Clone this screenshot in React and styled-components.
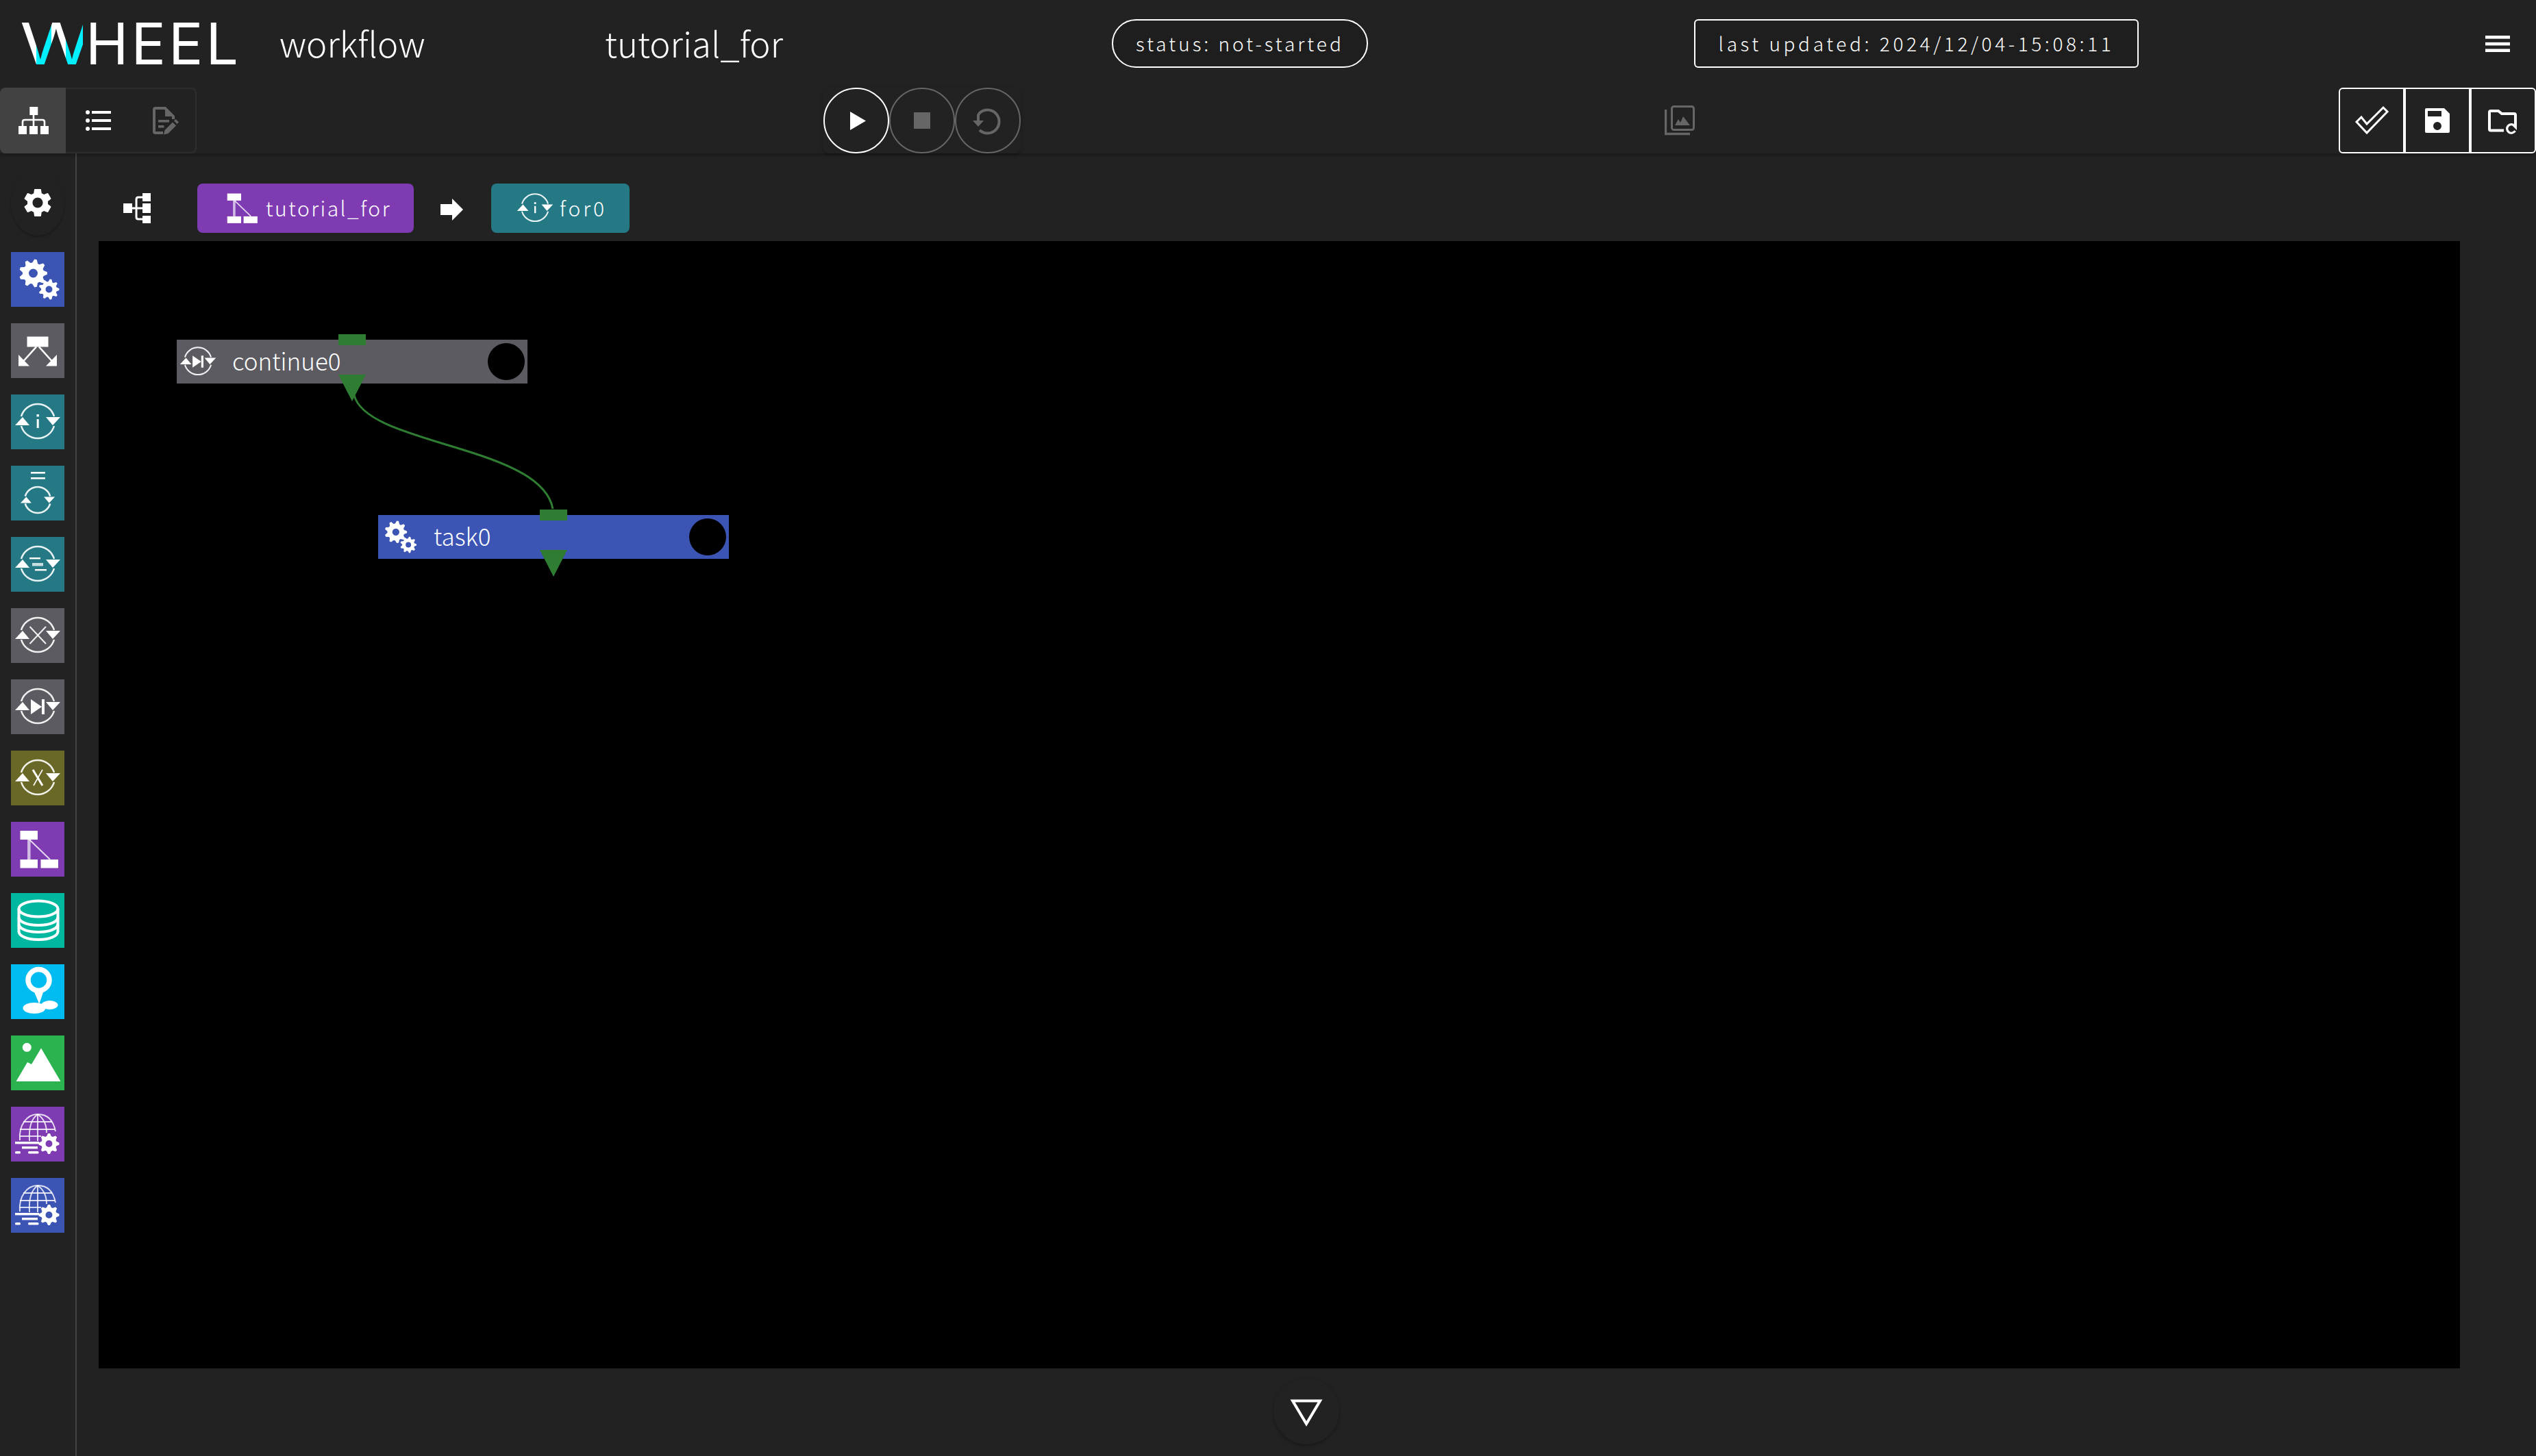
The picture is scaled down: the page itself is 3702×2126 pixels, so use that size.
import React from "react";
import styled, { createGlobalStyle } from "styled-components";
import { MdSettings } from "react-icons/md";

const Global = createGlobalStyle`
  html, body { margin: 0; padding: 0; background: #222222; }
  body { font-family: "Noto Sans CJK JP", "Noto Sans", sans-serif; color: #fff; }
  #root { width: 3702px; height: 2126px; overflow: hidden; }
`;

const Page = styled.div`
  width: 3702px;
  height: 2126px;
  display: flex;
  flex-direction: column;
  background: #222222;
`;

const Header = styled.header`
  height: 128px;
  flex: none;
  display: flex;
  align-items: center;
  position: relative;
`;

const Logo = styled.div`
  margin-left: 29px;
  width: 379px;
  height: 122px;
  display: flex;
  font-family: "Inter", sans-serif;
  font-weight: 400;
  font-size: 84px;
  line-height: 122px;
  letter-spacing: 4px;
  filter: blur(0.6px);
`;

const LogoW = styled.span`
  display: block;
  width: 72px;
  margin-right: 24px;
  letter-spacing: 0;
  transform: scaleX(1.28);
  transform-origin: left center;
  background: linear-gradient(90deg, #fff 0 26.5%, #00f0ff 26.5% 50%, #fff 50% 73%, #00f0ff 73%);
  -webkit-background-clip: text;
  background-clip: text;
  color: transparent;
`;

const HeaderTitle = styled.div`
  font-size: 51px;
  font-weight: 300;
  line-height: 64px;
  width: ${(p) => p.$w}px;
  margin-top: -5px;
`;

const Pill = styled.div`
  box-sizing: border-box;
  height: 71px;
  width: ${(p) => p.$w}px;
  margin-left: ${(p) => p.$ml}px;
  margin-top: -1px;
  padding-bottom: 2px;
  display: flex;
  align-items: center;
  justify-content: center;
  border: 2px solid #fff;
  border-radius: ${(p) => p.$r}px;
  background: #1e1e1e;
  font-size: 28px;
  font-weight: 300;
  letter-spacing: ${(p) => p.$ls}px;
  white-space: nowrap;
`;

const Menu = styled.svg`
  position: absolute;
  left: 3628px;
  top: 52px;
  width: 36px;
  height: 24px;
`;

const Toolbar = styled.div`
  height: 96px;
  flex: none;
  display: flex;
  align-items: flex-start;
  position: relative;
  box-shadow: 0 3px 4px rgba(0, 0, 0, 0.22);
  z-index: 2;
`;

const Toggle = styled.div`
  width: 287px;
  height: 96px;
  display: flex;
  border-radius: 8px;
  box-shadow: inset 0 0 0 2px #2e2e2e;
  overflow: hidden;
`;

const ToggleBtn = styled.div`
  width: 96px;
  height: 96px;
  background: ${(p) => (p.$on ? "#424242" : "transparent")};
  display: flex;
  svg { width: 96px; height: 96px; display: block; }
`;

const Players = styled.div`
  margin-left: 915px;
  display: flex;
  width: 288px;
  border-radius: 8px;
  box-shadow: 0 3px 4px rgba(0, 0, 0, 0.25);
`;

const RoundBtn = styled.div`
  box-sizing: border-box;
  width: 96px;
  height: 96px;
  border-radius: 50%;
  border: 2px solid ${(p) => (p.$on ? "#fff" : "#666")};
  display: flex;
  svg { width: 92px; height: 92px; display: block; }
`;

const GraphIcon = styled.svg`
  margin-left: 940px;
  margin-top: 26px;
  width: 44px;
  height: 44px;
`;

const SaveGroup = styled.div`
  margin-left: auto;
  display: flex;
  width: 288px;
  height: 96px;
`;

const SaveBtn = styled.div`
  box-sizing: border-box;
  width: 96px;
  height: 96px;
  border: 2px solid #fff;
  border-radius: ${(p) => p.$r};
  display: flex;
  svg { width: 92px; height: 92px; display: block; }
`;

const Main = styled.div`
  flex: 1;
  display: flex;
  min-height: 0;
`;

const Sidebar = styled.aside`
  box-sizing: border-box;
  width: 112px;
  flex: none;
  border-right: 2px solid #444;
  padding-left: 16px;
  display: flex;
  flex-direction: column;
`;

const CogButton = styled.div`
  width: 78px;
  height: 96px;
  margin-top: 24px;
  margin-bottom: 24px;
  border-radius: 50%;
  display: flex;
  align-items: center;
  justify-content: center;
  box-shadow: 0 2px 3px rgba(0, 0, 0, 0.25);
`;

const Palette = styled.div`
  display: flex;
  flex-direction: column;
  gap: 24px;
`;

const Card = styled.div`
  width: 78px;
  height: 80px;
  background: ${(p) => p.$bg};
  svg { display: block; width: 78px; height: 80px; filter: blur(0.35px); }
`;

const Content = styled.main`
  flex: 1;
  display: flex;
  flex-direction: column;
  min-width: 0;
`;

const Crumbs = styled.nav`
  box-sizing: border-box;
  height: 128px;
  flex: none;
  display: flex;
  align-items: center;
  padding: 32px 0 0 32px;
`;

const TreeIcon = styled.svg`
  margin-left: 36px;
  margin-right: 68px;
  width: 40px;
  height: 44px;
`;

const Crumb = styled.div`
  height: 72px;
  box-sizing: border-box;
  border-radius: 8px;
  background: ${(p) => p.$bg};
  display: flex;
  align-items: center;
  padding: 0 ${(p) => p.$pr}px 0 33px;
  font-size: 30px;
  font-weight: 300;
  letter-spacing: ${(p) => p.$ls}px;
  svg { flex: none; display: block; width: 62px; height: 64px; margin-right: 5px; filter: blur(0.3px); }
`;

const CrumbLabel = styled.span`
  margin-top: -2px;
`;

const Arrow = styled.svg`
  width: 34px;
  height: 32px;
  margin: 4px 40px 0 39px;
`;

const Canvas = styled.section`
  position: relative;
  height: 1646px;
  flex: none;
  margin: 0 111px 0 32px;
  background: #000;
  overflow: hidden;
`;

const Wire = styled.svg`
  position: absolute;
  left: 0;
  top: 0;
  width: 100%;
  height: 100%;
`;

const Node = styled.div`
  position: absolute;
  left: ${(p) => p.$x}px;
  top: ${(p) => p.$y}px;
  width: 512px;
  height: 64px;
  background: ${(p) => p.$bg};
  display: flex;
  align-items: center;
  font-size: 35px;
  font-weight: 300;
  svg { flex: none; width: 62px; height: 64px; margin: 0 19px 0 0; filter: blur(0.3px); }
`;

const NodeLabel = styled.span`
  margin-top: -5px;
`;

const Dot = styled.div`
  position: absolute;
  right: 4px;
  top: 5px;
  width: 54px;
  height: 54px;
  border-radius: 50%;
  background: #000;
`;

const InPort = styled.div`
  position: absolute;
  left: 236px;
  top: -8px;
  width: 40px;
  height: 16px;
  background: #2e7d32;
`;

const OutPort = styled.div`
  position: absolute;
  left: 236px;
  top: 51px;
  width: 40px;
  height: 39px;
  background: #2e7d32;
  clip-path: polygon(0 0, 100% 0, 50% 100%);
`;

const Footer = styled.div`
  flex: 1;
  display: flex;
  justify-content: center;
  padding-top: 14px;
`;

const DrawerBtn = styled.div`
  width: 96px;
  height: 97px;
  border-radius: 50%;
  display: flex;
  box-shadow: 0 3px 4px rgba(0, 0, 0, 0.22), 0 0 2px rgba(0, 0, 0, 0.12);
  svg { width: 96px; height: 97px; display: block; }
`;

/* ---- drawings ---- */
const gear = (cx, cy, r, teeth, hole) => {
  const pts = [];
  const n = teeth * 4;
  for (let i = 0; i < n; i++) {
    const a = (i / n) * Math.PI * 2 - Math.PI / teeth / 4;
    const rr = i % 4 < 2 ? r : r * 0.76;
    pts.push(`${(cx + rr * Math.cos(a)).toFixed(2)} ${(cy + rr * Math.sin(a)).toFixed(2)}`);
  }
  const h = `M${cx - hole} ${cy}a${hole} ${hole} 0 1 0 ${hole * 2} 0a${hole} ${hole} 0 1 0 ${-hole * 2} 0Z`;
  return `M${pts.join("L")}Z${h}`;
};

const Gear = ({ cx, cy, r, teeth = 9, hole }) => (
  <path d={gear(cx, cy, r, teeth, hole)} fill="#fff" fillRule="evenodd" />
);

const Loop = ({ cx = 39, cy = 39, r = 25, w = 2.6 }) => {
  const ax = r * 0.96;
  const ay = r * 0.28;
  const s = r / 25;
  return (
    <g>
      <path
        d={`M${cx - ax} ${cy - ay}A${r} ${r} 0 0 1 ${cx + ax} ${cy - ay}`}
        fill="none" stroke="#fff" strokeOpacity=".9" strokeWidth={w}
      />
      <path
        d={`M${cx - ax} ${cy + ay}A${r} ${r} 0 0 0 ${cx + ax} ${cy + ay}`}
        fill="none" stroke="#fff" strokeOpacity=".9" strokeWidth={w}
      />
      <polygon
        fill="#fff"
        points={`${cx - 33 * s} ${cy + 6 * s} ${cx - 12 * s} ${cy + 6 * s} ${cx - 22 * s} ${cy - 6 * s}`}
      />
      <polygon
        fill="#fff"
        points={`${cx + 12 * s} ${cy - 6 * s} ${cx + 33 * s} ${cy - 6 * s} ${cx + 22 * s} ${cy + 6 * s}`}
      />
    </g>
  );
};

const Ico = ({ children }) => <svg viewBox="0 0 78 80">{children}</svg>;

const TaskIcon = () => (
  <Ico>
    <Gear cx={32.5} cy={31} r={20.5} teeth={9} hole={6.5} />
    <Gear cx={55.5} cy={54.5} r={15} teeth={9} hole={5} />
  </Ico>
);

const IfIcon = () => (
  <Ico>
    <rect x="23.5" y="19.5" width="31" height="15" fill="#fff" />
    <g stroke="#fff" strokeWidth="2.6" fill="none">
      <path d="M37 34.5 14 60" />
      <path d="M41 34.5 64 60" />
    </g>
    <polygon fill="#fff" points="11 46 11 62.5 27 62.5" />
    <polygon fill="#fff" points="67 46 67 62.5 51 62.5" />
  </Ico>
);

const ForIcon = () => (
  <Ico>
    <Loop />
    <rect x="37.7" y="36" width="3" height="13" fill="#fff" />
    <rect x="37.5" y="29" width="3.4" height="3.4" fill="#fff" />
  </Ico>
);

const WhileIcon = () => (
  <Ico>
    <rect x="29" y="9" width="21" height="2.6" fill="#fff" />
    <rect x="29" y="17" width="21" height="2.6" fill="#fff" />
    <Loop cy={50} r={19} />
  </Ico>
);

const ForeachIcon = () => (
  <Ico>
    <Loop />
    <rect x="27" y="30" width="16" height="2.4" fill="#fff" />
    <rect x="31" y="38" width="16" height="4.5" fill="#fff" fillOpacity=".75" />
    <rect x="35" y="47" width="17" height="2.4" fill="#fff" />
  </Ico>
);

const BreakIcon = () => (
  <Ico>
    <Loop />
    <g stroke="#fff" strokeOpacity=".9" strokeWidth="2">
      <path d="M27.5 27 51 52" />
      <path d="M51 27 27.5 52" />
    </g>
  </Ico>
);

const ContinueIcon = () => (
  <Ico>
    <Loop />
    <polygon fill="#fff" points="29 29 45 40 29 51" />
    <rect x="45" y="29" width="4" height="22" fill="#fff" />
  </Ico>
);

const ExitIcon = () => (
  <Ico>
    <Loop />
    <g stroke="#fff" fill="none">
      <path d="M32 28 46 51" strokeWidth="3" />
      <path d="M46 28 33 51" strokeWidth="1.6" />
    </g>
  </Ico>
);

const WorkflowIcon = () => (
  <Ico>
    <rect x="13.5" y="13" width="25.5" height="13" fill="#fff" />
    <rect x="13.5" y="55" width="25.5" height="12.500" fill="#fff" />
    <rect x="43.5" y="55" width="25.5" height="12.500" fill="#fff" />
    <path d="M26.300 26V55" stroke="#fff" strokeOpacity=".65" strokeWidth="4.5" />
    <path d="M27 26 57 55" stroke="#fff" strokeOpacity=".8" strokeWidth="2" />
  </Ico>
);

const StorageIcon = () => (
  <Ico>
    <g fill="none" stroke="#fff" strokeWidth="4">
      <ellipse cx="40" cy="23" rx="28.5" ry="11.5" />
      <path d="M11.500 23V56C11.500 63 24 68 40 68S68.500 63 68.500 56V23" />
      <path d="M11.500 36C13 43 25 47 40 47S67 43 68.500 36" />
      <path d="M11.500 46C13 53 25 57 40 57S67 53 68.500 46" />
    </g>
  </Ico>
);

const SourceIcon = () => (
  <Ico>
    <circle cx="40.5" cy="23" r="15.5" fill="none" stroke="#fff" strokeWidth="7.5" />
    <polygon fill="#fff" points="33 38 48 38 41.300 58" />
    <ellipse cx="34" cy="64" rx="16.5" ry="8" fill="#fff" />
    <ellipse cx="56.5" cy="59.5" rx="12" ry="6.5" fill="#fff" />
  </Ico>
);

const ViewerIcon = () => (
  <Ico>
    <ellipse cx="23.3" cy="17.3" rx="6.5" ry="6.5" fill="#fff" />
    <polygon fill="#fff" points="7.500 67 24 39 30 42 44 18.500 72.500 67" />
  </Ico>
);

const WebIcon = () => (
  <Ico>
    <g fill="none" stroke="#fff" strokeOpacity=".82" strokeWidth="1.9">
      <path d="M13 49C11 26 24 11 39 11S62 20 65 36" />
      <path d="M39 11C29 18 26 34 27 50" />
      <path d="M39 11C49 18 52 28 52 38" />
      <path d="M39 11V50" />
      <path d="M18 22H60" />
      <path d="M13 33H64" />
      <path d="M13 43H44" />
    </g>
    <rect x="6" y="51" width="35" height="3.4" fill="#fff" />
    <rect x="16" y="58" width="23" height="3.4" fill="#fff" />
    <rect x="6" y="65" width="8" height="3.6" rx="1.6" fill="#fff" />
    <rect x="25" y="65" width="15.5" height="3.6" rx="1.6" fill="#fff" />
    <Gear cx={55.5} cy={54} r={15} teeth={8} hole={5} />
  </Ico>
);

const palette = [
  ["#3c55b4", TaskIcon],
  ["#5c5b61", IfIcon],
  ["#257985", ForIcon],
  ["#257985", WhileIcon],
  ["#257985", ForeachIcon],
  ["#5c5b61", BreakIcon],
  ["#5c5b61", ContinueIcon],
  ["#6a6827", ExitIcon],
  ["#7f3cb2", WorkflowIcon],
  ["#00b8a0", StorageIcon],
  ["#00bcf0", SourceIcon],
  ["#2bb350", ViewerIcon],
  ["#7f3cb2", WebIcon],
  ["#3c55b4", WebIcon],
];

export default function App() {
  return (
    <Page>
      <Global />
      <Header>
        <Logo>
          <LogoW>W</LogoW>
          <span>HEEL</span>
        </Logo>
        <HeaderTitle $w={475}>workflow</HeaderTitle>
        <HeaderTitle $w={0}>tutorial_for</HeaderTitle>
        <Pill $w={374} $ml={740} $r={36} $ls={4}>status: not-started</Pill>
        <Pill $w={649} $ml={476} $r={6} $ls={4.6}>last updated: 2024/12/04-15:08:11</Pill>
        <Menu viewBox="0 0 36 24">
          <rect y="0" width="36" height="4.6" fill="#fff" />
          <rect y="9.8" width="36" height="4.6" fill="#fff" />
          <rect y="19.4" width="36" height="4.6" fill="#fff" />
        </Menu>
      </Header>

      <Toolbar>
        <Toggle>
          <ToggleBtn $on>
            <svg viewBox="0 0 96 96">
              <rect x="43.3" y="28" width="12" height="12" fill="#fff" />
              <rect x="27" y="56" width="12" height="12" fill="#fff" />
              <rect x="43" y="56" width="12" height="12" fill="#fff" />
              <rect x="59" y="56" width="12" height="12" fill="#fff" />
              <path d="M33 56V50Q33 47 36 47H62Q65 47 65 50V56M49 40V56" fill="none" stroke="#fff" strokeWidth="2.6" />
            </svg>
          </ToggleBtn>
          <ToggleBtn>
            <svg viewBox="0 0 96 96">
              <g fill="#fff">
                <circle cx="32" cy="36" r="3" />
                <circle cx="32" cy="48" r="3" />
                <circle cx="32" cy="60" r="3" />
                <rect x="38" y="34" width="28" height="4" />
                <rect x="38" y="46" width="28" height="4" />
                <rect x="38" y="58" width="28" height="4" />
              </g>
            </svg>
          </ToggleBtn>
          <ToggleBtn>
            <svg viewBox="0 0 96 96">
              <path d="M46 66H35Q33 66 33 64V32Q33 30 35 30H49L61 42V46" fill="none" stroke="#666" strokeWidth="4" />
              <path d="M49 29 62 42H49Z" fill="#666" />
              <rect x="39" y="47" width="16" height="3.6" fill="#666" />
              <rect x="39" y="55" width="8.5" height="3.6" fill="#666" />
              <polygon fill="#666" points="47 68.500 48.500 62 60 50.500 65 55.500 53.500 67" />
              <polygon fill="#666" points="62 48.500 64.500 46 69 50.500 66.500 53" />
            </svg>
          </ToggleBtn>
        </Toggle>

        <Players>
          <RoundBtn $on>
            <svg viewBox="0 0 92 92"><polygon fill="#fff" points="37 33 60 46.500 37 60" /></svg>
          </RoundBtn>
          <RoundBtn>
            <svg viewBox="0 0 92 92"><rect x="34" y="34" width="24" height="24" fill="#666" /></svg>
          </RoundBtn>
          <RoundBtn>
            <svg viewBox="0 0 92 92">
              <path d="M32 46V38L34 35A17 17 0 1 1 34 60" fill="none" stroke="#666" strokeWidth="4" />
              <polygon fill="#666" points="24 46 40 46 32 55" />
            </svg>
          </RoundBtn>
        </Players>

        <GraphIcon viewBox="0 0 44 44">
          <rect x="10.5" y="1.5" width="32" height="34" rx="3" fill="none" stroke="#666" strokeWidth="3" />
          <path d="M1.500 6V41.500H37" fill="none" stroke="#666" strokeWidth="3.4" />
          <polygon fill="#666" points="15 29 20 20 23 25 27 16 37 29" />
        </GraphIcon>

        <SaveGroup>
          <SaveBtn $r="6px 0 0 6px">
            <svg viewBox="0 0 92 92">
              <polygon fill="none" stroke="#fff" strokeWidth="3" points="24 48 39 64 69 33 63 27 39 51 31 41" />
            </svg>
          </SaveBtn>
          <SaveBtn $r="0">
            <svg viewBox="0 0 92 92">
              <path fillRule="evenodd" fill="#fff" d="M30 28H56L64 36V62Q64 64 62 64H30Q28 64 28 62V30Q28 28 30 28ZM32 32V40H52V32ZM46 48A6 6 0 1 0 46 60A6 6 0 1 0 46 48Z" />
            </svg>
          </SaveBtn>
          <SaveBtn $r="0 6px 6px 0">
            <svg viewBox="0 0 92 92">
              <path d="M47 60.500H28Q26 60.500 26 58.500V34Q26 32 28 32H39L44 36H62Q64 36 64 38V52" fill="none" stroke="#fff" strokeWidth="4" />
              <path d="M62.500 53.500A6.300 6.300 0 1 0 63.500 61" fill="none" stroke="#fff" strokeWidth="3.2" />
              <polygon fill="#fff" points="58 52 66 52 66 60" />
            </svg>
          </SaveBtn>
        </SaveGroup>
      </Toolbar>

      <Main>
        <Sidebar>
          <CogButton>
            <MdSettings size={50} color="#fff" />
          </CogButton>
          <Palette>
            {palette.map(([bg, Icon], i) => (
              <Card key={i} $bg={bg}><Icon /></Card>
            ))}
          </Palette>
        </Sidebar>

        <Content>
          <Crumbs>
            <TreeIcon viewBox="0 0 40 44">
              <rect x="0" y="15" width="13" height="14" fill="#fff" />
              <rect x="28" y="0" width="12" height="12" fill="#fff" />
              <rect x="28" y="15" width="12" height="14" fill="#fff" />
              <rect x="28" y="33" width="12" height="11" fill="#fff" />
              <path d="M28 6H22Q19 6 19 9V35Q19 38 22 38H28M13 22H28" fill="none" stroke="#fff" strokeWidth="3" />
            </TreeIcon>
            <Crumb $bg="#7f3cb2" $pr={33} $ls={2.5}>
              <WorkflowIcon />
              <CrumbLabel>tutorial_for</CrumbLabel>
            </Crumb>
            <Arrow viewBox="0 0 34 32">
              <polygon fill="#fff" points="0 8 17 8 17 0 33 16 17 32 17 24 0 24" />
            </Arrow>
            <Crumb $bg="#257985" $pr={33} $ls={4}>
              <ForIcon />
              <CrumbLabel>for0</CrumbLabel>
            </Crumb>
          </Crumbs>

          <Canvas>
            <Wire>
              <path d="M373 225C391 298 646 298 663 391" fill="none" stroke="#2e7d32" strokeWidth="3" />
            </Wire>
            <Node $x={114} $y={144} $bg="#5c5b61">
              <ContinueIcon />
              <NodeLabel>continue0</NodeLabel>
              <Dot />
              <InPort />
              <OutPort />
            </Node>
            <Node $x={408} $y={400} $bg="#3c55b4">
              <TaskIcon />
              <NodeLabel>task0</NodeLabel>
              <Dot />
              <InPort />
              <OutPort />
            </Node>
          </Canvas>

          <Footer>
            <DrawerBtn>
              <svg viewBox="0 0 96 97">
                <polygon fill="none" stroke="#fff" strokeWidth="4" points="28 33.500 68 33.500 48 67" />
              </svg>
            </DrawerBtn>
          </Footer>
        </Content>
      </Main>
    </Page>
  );
}
